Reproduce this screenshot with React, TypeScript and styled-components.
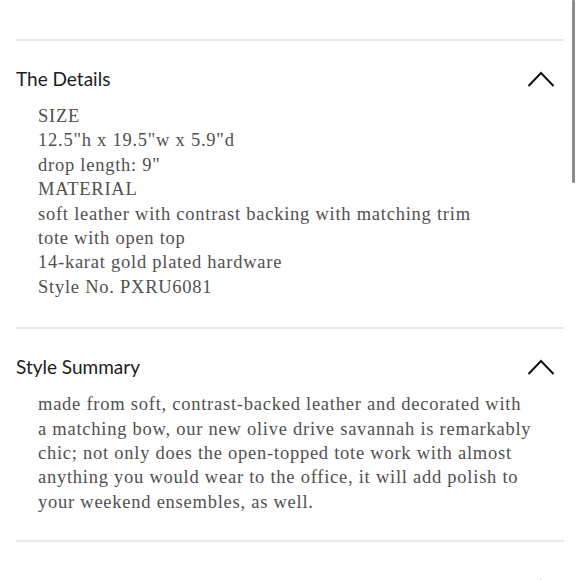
import React from "react";
import styled, { createGlobalStyle } from "styled-components";

const Global = createGlobalStyle`
  html, body { margin: 0; padding: 0; background: #fff; height: 580px; overflow: hidden; }
  #root { height: 580px; }
`;

const Page = styled.div`
  position: relative;
  height: 580px;
  overflow: hidden;
  padding: 39px 16px 0 16px;
  box-sizing: border-box;
`;

const Scrollbar = styled.div`
  position: absolute;
  top: 0;
  right: 5px;
  width: 3px;
  height: 183px;
  background: #8c8c8c;
  border-radius: 1px;
`;

const Section = styled.section`
  border-top: 2px solid #e8e9eb;
`;

const Header = styled.div<{ $top?: number }>`
  display: flex;
  align-items: center;
  justify-content: space-between;
  height: 24px;
  padding: ${(p) => p.$top ?? 26}px 9px 13px 0;
`;

const Title = styled.h2`
  margin: 0;
  font-family: Lato, "Liberation Sans", sans-serif;
  font-weight: 400;
  font-size: 19px;
  line-height: 24px;
  color: #1c1c1c;
`;

const Body = styled.div<{ $bottom?: number }>`
  padding: 0 0 ${(p) => p.$bottom ?? 28}px 22px;
  font-family: "Liberation Serif", serif;
  font-size: 18.5px;
  letter-spacing: 0.75px;
  line-height: 24.4px;
  color: #505050;
  white-space: nowrap;
`;

const Line = styled.div``;

const Chevron = () => (
  <svg width="28" height="16" viewBox="0 0 28 16">
    <polyline points="1.5,15 14,2 26.5,15" fill="none" stroke="#111" strokeWidth="2" />
  </svg>
);

export default function App() {
  const details = [
    "SIZE",
    '12.5"h x 19.5"w x 5.9"d',
    'drop length: 9"',
    "MATERIAL",
    "soft leather with contrast backing with matching trim",
    "tote with open top",
    "14-karat gold plated hardware",
    "Style No. PXRU6081",
  ];
  const summary = [
    "made from soft, contrast-backed leather and decorated with",
    "a matching bow, our new olive drive savannah is remarkably",
    "chic; not only does the open-topped tote work with almost",
    "anything you would wear to the office, it will add polish to",
    "your weekend ensembles, as well.",
  ];
  return (
    <>
      <Global />
      <Page>
        <Scrollbar />
        <Section>
          <Header>
            <Title>The Details</Title>
            <Chevron />
          </Header>
          <Body>
            {details.map((l) => (
              <Line key={l}>{l}</Line>
            ))}
          </Body>
        </Section>
        <Section>
          <Header>
            <Title>Style Summary</Title>
            <Chevron />
          </Header>
          <Body $bottom={26}>
            {summary.map((l) => (
              <Line key={l}>{l}</Line>
            ))}
          </Body>
        </Section>
        <Section>
          <Header $top={33}>
            <Title>About the Brand</Title>
            <Chevron />
          </Header>
        </Section>
      </Page>
    </>
  );
}
